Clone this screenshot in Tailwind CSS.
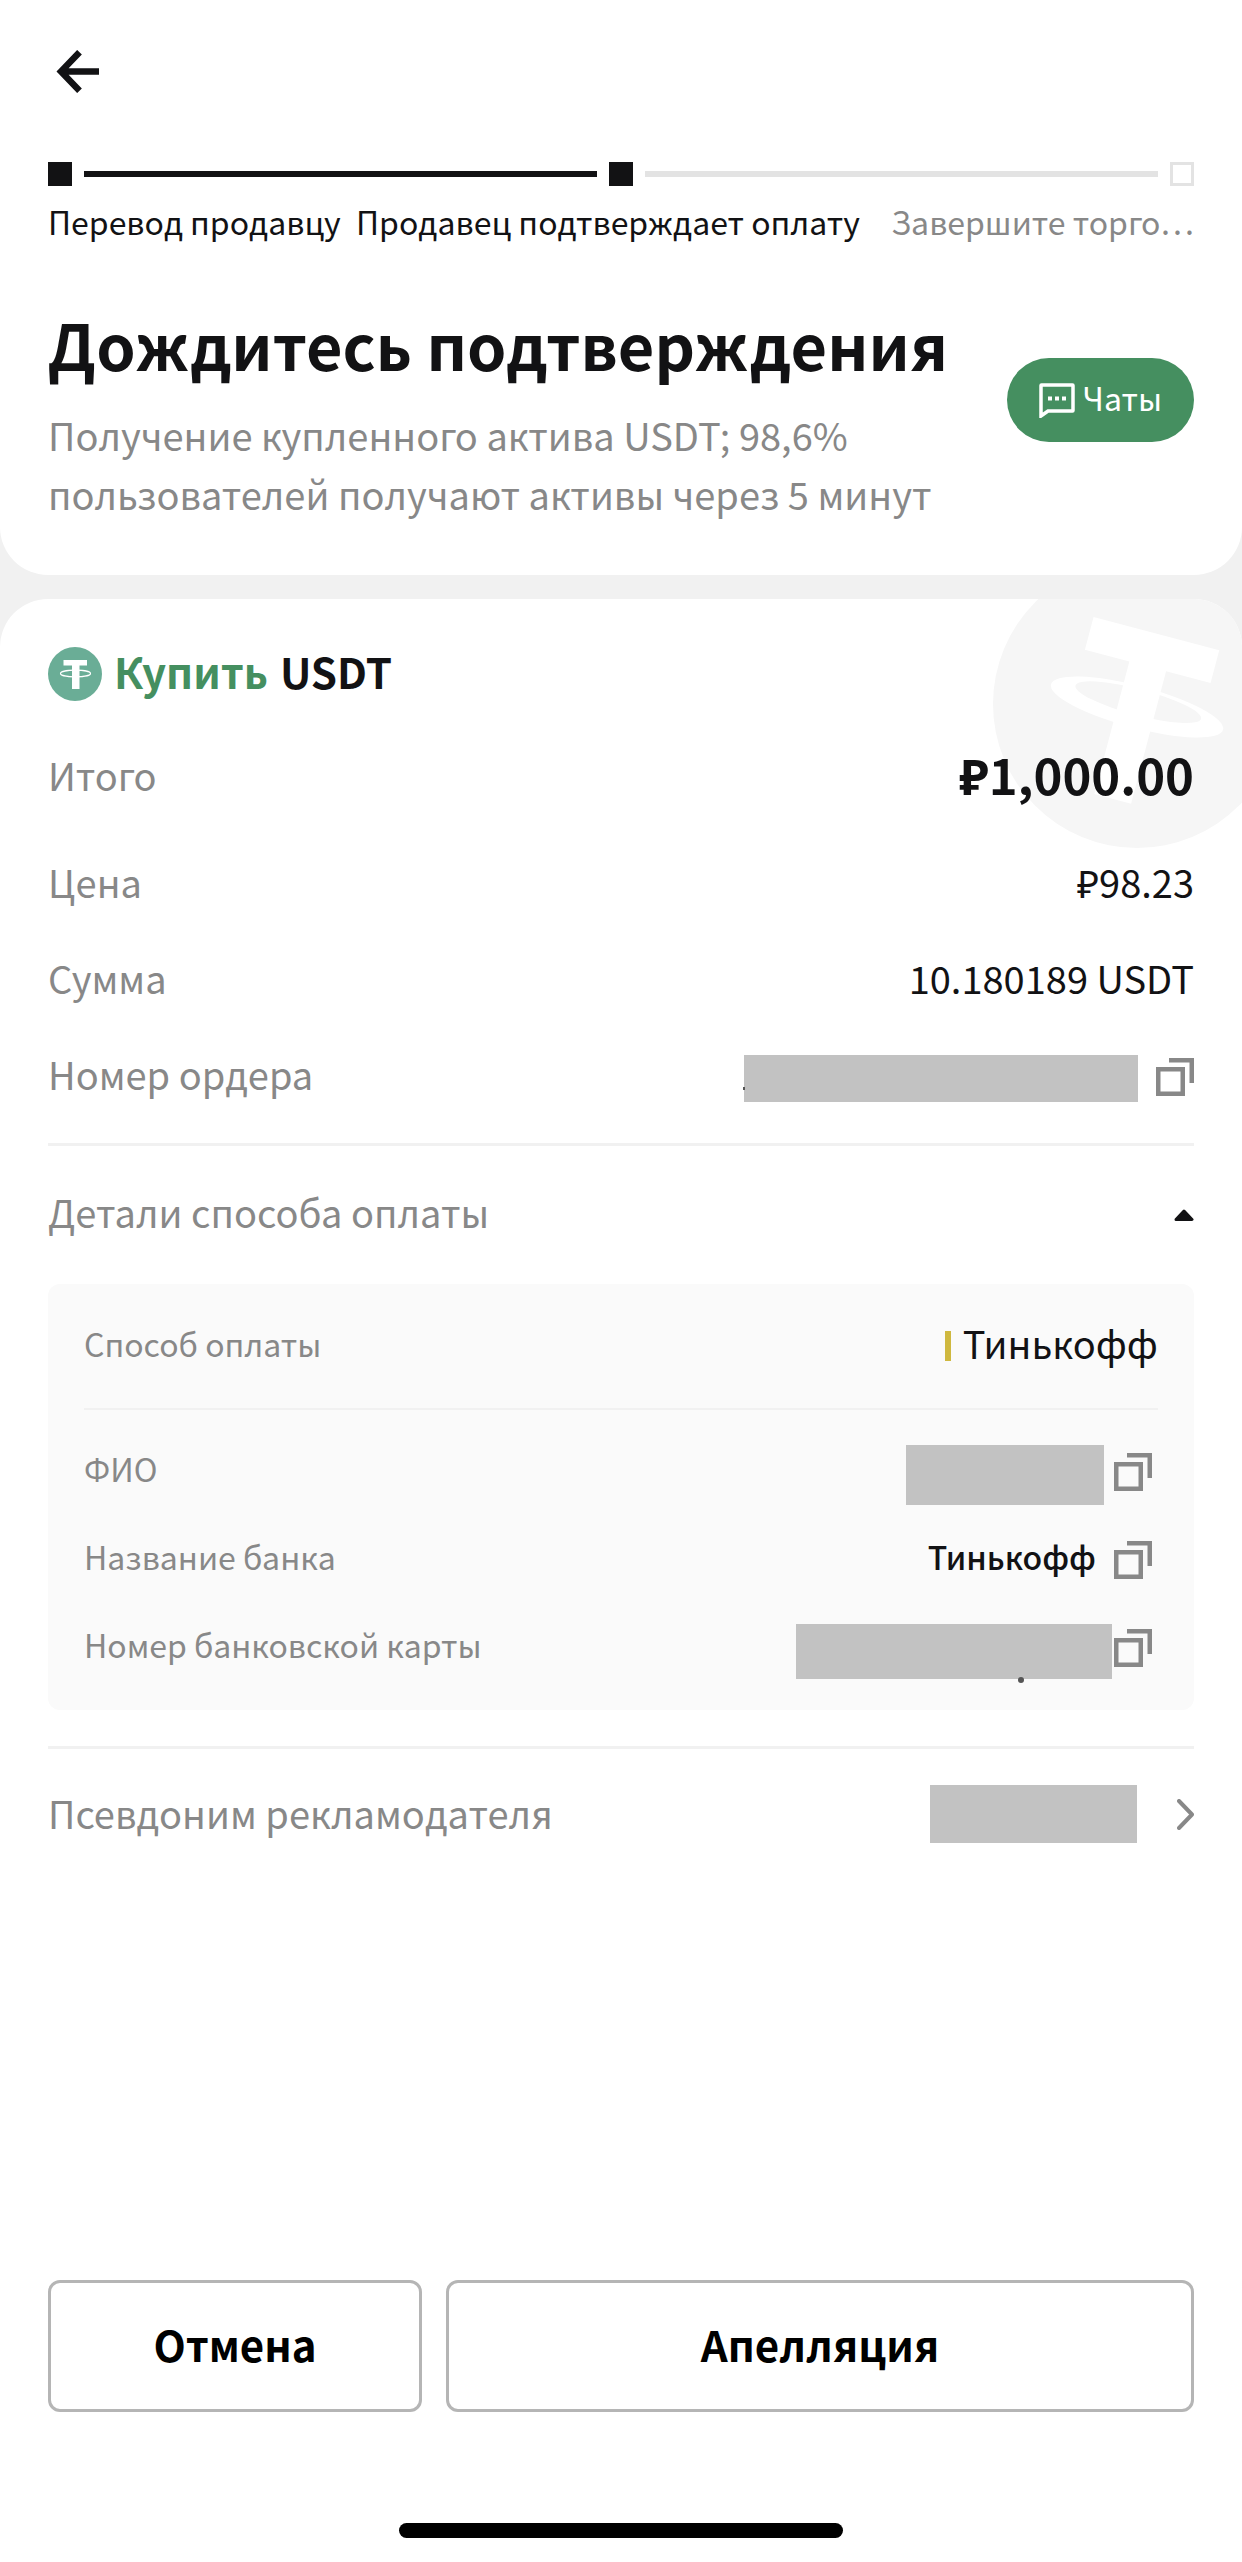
<!DOCTYPE html>
<html lang="ru">
<head>
    <meta charset="UTF-8">
    <meta name="viewport" content="width=device-width, initial-scale=1.0">
    <title>Дождитесь подтверждения</title>
    <script src="https://cdn.jsdelivr.net/npm/@tailwindcss/browser@4"></script>
    <style>
        body {
            font-family: 'Noto Sans CJK SC', 'Noto Sans', sans-serif;
        }
        button { cursor: pointer; }
    </style>
</head>
<body class="bg-[#f1f1f1] text-[#121214]">
    <svg class="hidden">
        <symbol id="copy" viewBox="0 0 38 38">
            <path d="M2.25 11.25H26.75V35.75H2.25ZM13 2.25H35.75V25" fill="none" stroke="#888888" stroke-width="4.5"/>
        </symbol>
    </svg>

    <div class="flex min-h-screen flex-col">
        <!-- Шапка -->
        <header class="rounded-b-[48px] bg-white px-12 pt-[50px] pb-[52px]">
            <button class="block pl-2" aria-label="Назад">
                <svg width="43" height="43" viewBox="0 0 43 43" fill="none" stroke="#121214" stroke-width="6.5"><path d="M23.5 2.2L5 21.5L23.5 40.8M5 21.5H43"/></svg>
            </button>

            <div class="mt-[69px] flex items-center gap-3">
                <span class="size-6 bg-[#121214]"></span>
                <span class="h-1.5 flex-1 bg-[#121214]"></span>
                <span class="size-6 bg-[#121214]"></span>
                <span class="h-1.5 flex-1 bg-[#e3e3e3]"></span>
                <span class="size-6 border-3 border-[#e3e3e3]"></span>
            </div>
            <div class="mt-3 flex justify-between text-[32px] leading-[46px] whitespace-nowrap">
                <span>Перевод продавцу</span>
                <span>Продавец подтверждает оплату</span>
                <span class="pl-4 text-[#888888]">Завершите торго…</span>
            </div>

            <div class="mt-[68px] flex items-start justify-between">
                <div>
                    <h1 class="text-[63px] leading-[64px] font-bold">Дождитесь подтверждения</h1>
                    <p class="mt-[29px] max-w-[900px] text-[38px] leading-[59px] text-[#888888]">Получение купленного актива USDT; 98,6% пользователей получают активы через 5 минут</p>
                </div>
                <button class="mt-[46px] flex h-[84px] shrink-0 items-center gap-2 rounded-full bg-[#458f60] px-8 text-[32px] text-white">
                    <svg width="36" height="36" viewBox="0 0 36 36" fill="none"><path d="M2 31V3.5Q2 3 2.500 3H33.500Q34 3 34 3.500V28.500Q34 29 33.500 29H9L2 34Z" stroke="#fff" stroke-width="3.500"/><path d="M9 14.500h4v4H9zM16 14.500h4v4h-4zM23 14.500h4v4h-4z" fill="#fff"/></svg>
                    <span class="pb-1.5">Чаты</span>
                </button>
            </div>
        </header>

        <!-- Ордер -->
        <main class="relative mt-6 flex flex-1 flex-col overflow-hidden rounded-t-[48px] bg-white px-12">
            <svg class="absolute -top-10 -right-10" width="290" height="290" viewBox="0 0 290 290">
                <circle cx="145" cy="145" r="144" fill="#f6f6f6"/>
                <g transform="translate(145 148) rotate(14.8)" fill="#ffffff">
                    <path fill-rule="evenodd" d="M-89 0A89 21 0 1 0 89 0A89 21 0 1 0 -89 0ZM-65 -5A65 13 0 1 1 65 -5A65 13 0 1 1 -65 -5Z"/>
                    <path d="M-65 -76H65V-42H19V95H-19V-42H-65Z"/>
                </g>
            </svg>

            <div class="relative">
                <h2 class="mt-12 flex h-[54px] items-center gap-3 text-[42px] leading-[54px] font-bold">
                    <svg width="54" height="54" viewBox="0 0 54 54"><circle cx="27" cy="27" r="27" fill="#6aad96"/><path d="M15.500 13H39V18.500H31.500V42H24V18.500H15.500Z" fill="#fff"/><ellipse cx="27.500" cy="26.500" rx="15" ry="3.300" fill="none" stroke="#fff" stroke-width="1.200"/></svg>
                    <span class="flex gap-3 pb-1.5"><span class="text-[#458f60]">Купить</span>USDT</span>
                </h2>

                <div class="mt-3.5 flex h-[118px] items-center justify-between">
                    <span class="text-[38px] text-[#888888]">Итого</span>
                    <span class="text-[49px] leading-[64px] font-bold">₽1,000.00</span>
                </div>
                <div class="flex h-24 items-center justify-between text-[38px]">
                    <span class="text-[#888888]">Цена</span>
                    <span>₽98.23</span>
                </div>
                <div class="flex h-24 items-center justify-between text-[38px]">
                    <span class="text-[#888888]">Сумма</span>
                    <span>10.180189 USDT</span>
                </div>
                <div class="flex h-24 items-center justify-between text-[38px]">
                    <span class="text-[#888888]">Номер ордера</span>
                    <div class="flex items-center gap-[18px] pt-2">
                        <span class="relative mt-0.5 h-[47px] w-[394px] bg-[#c2c2c2]"><span class="absolute top-8 -left-px h-[3px] w-0.5 bg-[#555555]"></span></span>
                        <button aria-label="Скопировать номер ордера"><svg width="38" height="38"><use href="#copy"/></svg></button>
                    </div>
                </div>

                <button id="details-toggle" class="mt-[22px] flex h-[141px] w-full items-center justify-between border-t-3 border-[#f1f1f1] text-[38px] text-[#888888]" aria-expanded="true" aria-controls="details">
                    <span class="pb-2">Детали способа оплаты</span>
                    <svg width="20" height="12" viewBox="0 0 20 12" fill="#121214" stroke="#121214" stroke-width="3" stroke-linejoin="round"><path d="M10 2L18 10.500H2Z"/></svg>
                </button>

                <div id="details" class="rounded-xl bg-[#fafafa] px-9 pb-[22px] text-[32px]">
                    <div class="mb-3.5 flex h-[126px] items-center justify-between border-b-2 border-[#f1f1f1]">
                        <span class="pb-1.5 text-[#888888]">Способ оплаты</span>
                        <span class="flex items-center gap-3">
                            <span class="h-[30px] w-1.5 bg-[#cfb83f]"></span>
                            <span class="pb-2 text-[38px]">Тинькофф</span>
                        </span>
                    </div>
                    <div class="flex h-22 items-center justify-between">
                        <span class="text-[#888888]">ФИО</span>
                        <div class="flex items-center gap-2.5 pt-2 pr-1.5">
                            <span class="mt-1.5 h-[60px] w-[198px] bg-[#c2c2c2]"></span>
                            <button aria-label="Скопировать ФИО"><svg width="38" height="38"><use href="#copy"/></svg></button>
                        </div>
                    </div>
                    <div class="flex h-22 items-center justify-between">
                        <span class="text-[#888888]">Название банка</span>
                        <div class="flex items-center gap-[18px] pt-2 pr-1.5">
                            <span class="pb-2 font-medium">Тинькофф</span>
                            <button aria-label="Скопировать название банка"><svg width="38" height="38"><use href="#copy"/></svg></button>
                        </div>
                    </div>
                    <div class="flex h-22 items-center justify-between">
                        <span class="text-[#888888]">Номер банковской карты</span>
                        <div class="flex items-center gap-0.5 pt-2 pr-1.5">
                            <span class="relative mt-1.5 h-[55px] w-[316px] bg-[#c2c2c2]"><span class="absolute right-[88px] -bottom-1 size-1.5 rounded-full bg-[#555555]"></span></span>
                            <button aria-label="Скопировать номер карты"><svg width="38" height="38"><use href="#copy"/></svg></button>
                        </div>
                    </div>
                </div>

                <a href="#" class="mt-9 flex h-[129px] items-center justify-between border-t-3 border-[#f1f1f1] text-[38px] text-[#888888]">
                    Псевдоним рекламодателя
                    <span class="flex items-center gap-10 pt-1">
                        <span class="h-[58px] w-[207px] bg-[#c2c2c2]"></span>
                        <svg width="17" height="31" viewBox="0 0 17 31" fill="none" stroke="#888888" stroke-width="4" stroke-linecap="round" stroke-linejoin="round"><path d="M2 2L15 15.500L2 29"/></svg>
                    </span>
                </a>
            </div>

            <!-- Кнопки действий -->
            <footer class="mt-auto pb-6">
                <div class="grid grid-cols-[1fr_2fr] gap-6 text-[42px] font-bold text-black">
                    <button class="h-[132px] rounded-xl border-3 border-[#b5b5b5] pb-1.5">Отмена</button>
                    <button class="h-[132px] rounded-xl border-3 border-[#b5b5b5] pb-1.5">Апелляция</button>
                </div>
                <div class="mx-auto mt-[111px] h-[15px] w-[444px] rounded-full bg-black"></div>
            </footer>
        </main>
    </div>

    <script>
        const detailsToggle = document.getElementById('details-toggle')
        const details = document.getElementById('details')

        detailsToggle.addEventListener('click', () => {
            const hidden = details.classList.toggle('hidden')
            detailsToggle.setAttribute('aria-expanded', String(!hidden))
        })
    </script>
</body>
</html>
